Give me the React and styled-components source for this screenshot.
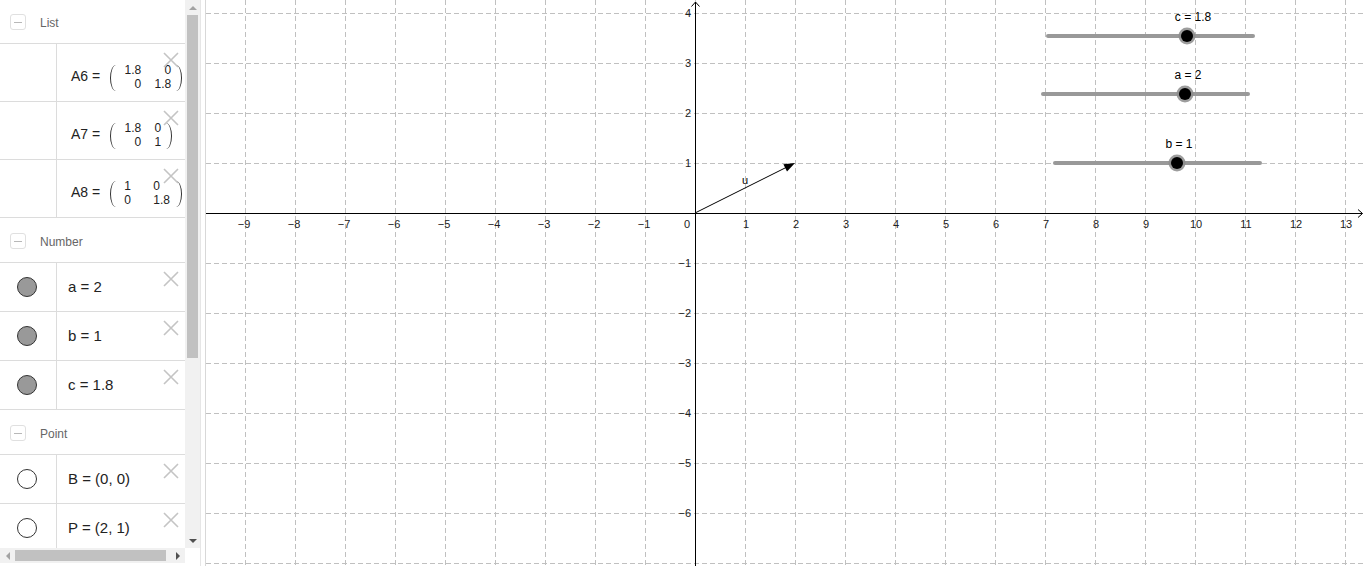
import React from "react";
import styled, { createGlobalStyle } from "styled-components";

const GlobalStyle = createGlobalStyle`
  html, body {
    margin: 0;
    padding: 0;
    overflow: hidden;
    background: #fff;
  }
  body {
    font-family: "Liberation Sans", Arial, sans-serif;
  }
`;

const groups = [
  {
    title: "List",
    kind: "matrix",
    items: [
      { name: "A6", cols: "17px 17px", gap: 13, align: "right", cells: ["1.8", "0", "0", "1.8"] },
      { name: "A7", cols: "17px 7px", gap: 13, align: "right", cells: ["1.8", "0", "0", "1"] },
      { name: "A8", cols: "7px 18px", gap: 22, align: "left", cells: ["1", "0", "0", "1.8"] },
    ],
  },
  {
    title: "Number",
    kind: "number",
    items: [{ text: "a = 2" }, { text: "b = 1" }, { text: "c = 1.8" }],
  },
  {
    title: "Point",
    kind: "point",
    items: [{ text: "B = (0, 0)" }, { text: "P = (2, 1)" }],
  },
];

const AlgebraView = () => (
  <Panel>
    <PanelBody>
      <ListArea>
        {groups.map((g, gi) => (
          <div key={g.title}>
            <GroupHeader first={gi === 0}>
              <CollapseBtn />
              <GroupTitle>{g.title}</GroupTitle>
            </GroupHeader>
            {g.items.map((item, i) => (
              <Row key={i} tall={g.kind === "matrix"}>
                <MarbleCell>
                  {g.kind !== "matrix" && <Marble filled={g.kind === "number"} />}
                </MarbleCell>
                <ContentCell>
                  {g.kind === "matrix" ? (
                    <MatrixLine>
                      <MatrixName>{item.name} =</MatrixName>
                      <Paren />
                      <MatrixGrid cols={item.cols} gap={item.gap} align={item.align}>
                        {item.cells.map((c, j) => (
                          <span key={j}>{c}</span>
                        ))}
                      </MatrixGrid>
                      <Paren right />
                    </MatrixLine>
                  ) : (
                    <ItemText>{item.text}</ItemText>
                  )}
                </ContentCell>
                <DeleteBtn>
                  <svg width="16" height="16" viewBox="0 0 16 16">
                    <path d="M1 1 L15 15 M15 1 L1 15" stroke="#c4c4c4" strokeWidth="1.6" fill="none" />
                  </svg>
                </DeleteBtn>
              </Row>
            ))}
          </div>
        ))}
      </ListArea>
      <VScroll>
        <ScrollBtn>
          <Tri dir="up" />
        </ScrollBtn>
        <VThumb />
        <Filler />
        <ScrollBtn>
          <Tri dir="down" dark />
        </ScrollBtn>
      </VScroll>
    </PanelBody>
    <HScrollRow>
      <HScroll>
        <ScrollBtn>
          <Tri dir="left" />
        </ScrollBtn>
        <HThumb />
        <Filler />
        <ScrollBtn>
          <Tri dir="right" dark />
        </ScrollBtn>
      </HScroll>
      <Corner />
    </HScrollRow>
  </Panel>
);

// graphics view
const W = 1160;
const H = 566;
const ox = 489;
const oy = 213;
const unit = 50;
const minus = (n) => (n < 0 ? "\u2212" + Math.abs(n) : String(n));

const sliders = [
  { label: "c = 1.8", x1: 842, x2: 1047, y: 36, hx: 981, lx: 987, ly: 21 },
  { label: "a = 2", x1: 837, x2: 1042, y: 94, hx: 979, lx: 982, ly: 79 },
  { label: "b = 1", x1: 849, x2: 1054, y: 163, hx: 971, lx: 973, ly: 148 },
];

const Graphics = () => {
  const xs = [];
  for (let k = -9; k <= 13; k++) xs.push(k);
  const ys = [];
  for (let k = -7; k <= 4; k++) ys.push(k);
  return (
    <GraphView>
      <svg width={W} height={H} viewBox={`0 0 ${W} ${H}`}>
        <g stroke="#c0c0c0" strokeWidth="1" strokeDasharray="5 3">
          {xs.map((k) => (
            <line key={"v" + k} x1={ox + k * unit + 0.5} y1="0" x2={ox + k * unit + 0.5} y2={H} />
          ))}
          {ys.map((k) => (
            <line key={"h" + k} x1="0" y1={oy - k * unit + 0.5} x2={W} y2={oy - k * unit + 0.5} />
          ))}
        </g>
        <g stroke="#000" strokeWidth="1" fill="none">
          <line x1="0" y1={oy + 0.5} x2="1156" y2={oy + 0.5} />
          <polyline points="1152,209.5 1156.5,213.5 1152,217.5" />
          <line x1={ox + 0.5} y1="2" x2={ox + 0.5} y2={H} />
          <polyline points="485.5,6.5 489.5,2 493.5,6.5" />
        </g>
        <g fontFamily="'Liberation Sans', Arial, sans-serif" fontSize="11" fill="#222">
          {xs
            .filter((k) => k !== 0)
            .map((k) => (
              <text key={"xl" + k} x={ox + k * unit + (k < 0 ? -1 : 1)} y={oy + 15} textAnchor="middle">
                {minus(k)}
              </text>
            ))}
          {ys
            .filter((k) => k !== 0 && k > -7)
            .map((k) => (
              <text key={"yl" + k} x={ox - 4} y={oy - k * unit + 4} textAnchor="end">
                {minus(k)}
              </text>
            ))}
          <text x={ox - 5} y={oy + 15} textAnchor="end">0</text>
        </g>
        {/* vector u */}
        <line x1={ox} y1={oy} x2="581" y2="167" stroke="#000" strokeWidth="1" />
        <polygon points="589,163 577.4,164.3 581,171.5" fill="#000" />
        <text x="539" y="184" textAnchor="middle" fontSize="11" fill="#000" fontFamily="'Liberation Sans', Arial, sans-serif">
          u
        </text>
        {sliders.map((s) => (
          <g key={s.label}>
            <line x1={s.x1} y1={s.y} x2={s.x2} y2={s.y} stroke="#999" strokeWidth="4" strokeLinecap="round" />
            <circle cx={s.hx} cy={s.y} r="8.5" fill="#8c8c8c" opacity="0.85" />
            <circle cx={s.hx} cy={s.y} r="6" fill="#000" />
            <text
              x={s.lx}
              y={s.ly}
              textAnchor="middle"
              fontSize="12"
              fontFamily="'Liberation Sans', Arial, sans-serif"
              fill="#000"
            >
              {s.label}
            </text>
          </g>
        ))}
      </svg>
    </GraphView>
  );
};

export default function App() {
  return (
    <>
      <GlobalStyle />
      <Page>
        <AlgebraView />
        <Splitter />
        <Graphics />
      </Page>
    </>
  );
}

// css
const Page = styled.div`
  display: flex;
  width: 1366px;
  height: 566px;
  overflow: hidden;
  background: #fff;
`;

const Panel = styled.div`
  width: 200px;
  flex: none;
  display: flex;
  flex-direction: column;
  padding-bottom: 3px;
  box-sizing: border-box;
`;

const PanelBody = styled.div`
  display: flex;
  height: 548px;
`;

const ListArea = styled.div`
  width: 185px;
  overflow: hidden;
`;

const GroupHeader = styled.div`
  height: ${(p) => (p.first ? "44px" : "45px")};
  box-sizing: border-box;
  border-bottom: 1px solid #dcdcdc;
  display: flex;
  align-items: center;
  padding: ${(p) => (p.first ? "2px" : "3px")} 0 0 10px;
`;

const CollapseBtn = styled.span`
  width: 14px;
  height: 14px;
  border: 1px solid #e0e0e0;
  border-radius: 3px;
  position: relative;
  margin-top: -1px;
  &::after {
    content: "";
    position: absolute;
    left: 3px;
    right: 3px;
    top: 7px;
    height: 1px;
    background: #b8b8b8;
  }
`;

const GroupTitle = styled.span`
  margin-left: 14px;
  font-size: 12px;
  color: #666;
`;

const Row = styled.div`
  position: relative;
  display: flex;
  height: ${(p) => (p.tall ? "58px" : "49px")};
  box-sizing: border-box;
  border-bottom: 1px solid #dcdcdc;
`;

const MarbleCell = styled.div`
  width: 56px;
  flex: none;
  border-right: 1px solid #dcdcdc;
  display: flex;
  align-items: center;
  justify-content: center;
  padding-bottom: 1px;
`;

const Marble = styled.span`
  width: 18px;
  height: 18px;
  border-radius: 50%;
  border: 1px solid #333;
  background: ${(p) => (p.filled ? "#999" : "#fff")};
  margin-right: 2px;
`;

const ContentCell = styled.div`
  flex: 1;
  display: flex;
  align-items: center;
  padding-left: 11px;
  padding-bottom: 2px;
`;

const ItemText = styled.span`
  font-size: 15px;
  color: #222;
  white-space: nowrap;
`;

const MatrixLine = styled.div`
  display: flex;
  align-items: center;
  padding-top: 11px;
  margin-left: 3px;
  white-space: nowrap;
`;

const MatrixName = styled.span`
  font-size: 14px;
  color: #222;
  margin-right: 10px;
  margin-top: -3px;
`;

const Paren = styled.span`
  width: 6px;
  height: 26px;
  box-sizing: border-box;
  margin-top: 2px;
  ${(p) =>
    p.right
      ? `border-right: 1.4px solid #333; border-radius: 0 100% 100% 0 / 0 50% 50% 0;`
      : `border-left: 1.4px solid #333; border-radius: 100% 0 0 100% / 50% 0 0 50%;`}
`;

const MatrixGrid = styled.div`
  display: grid;
  grid-template-columns: ${(p) => p.cols};
  column-gap: ${(p) => p.gap}px;
  line-height: 14.5px;
  font-size: 12px;
  color: #222;
  text-align: ${(p) => p.align};
  padding: 0 5px 0 8px;
`;

const DeleteBtn = styled.span`
  position: absolute;
  top: 8px;
  left: 163px;
  width: 16px;
  height: 16px;
  display: flex;
`;

const VScroll = styled.div`
  width: 15px;
  background: #f1f1f1;
  display: flex;
  flex-direction: column;
`;

const ScrollBtn = styled.div`
  width: 15px;
  height: 15px;
  flex: none;
  display: flex;
  align-items: center;
  justify-content: center;
`;

const Filler = styled.div`
  flex: 1;
`;

const VThumb = styled.div`
  height: 343px;
  margin: 0 2px;
  background: #c1c1c1;
`;

const HScrollRow = styled.div`
  display: flex;
  height: 15px;
`;

const HScroll = styled.div`
  width: 185px;
  background: #f1f1f1;
  display: flex;
`;

const HThumb = styled.div`
  width: 151px;
  margin: 2px 0;
  background: #c1c1c1;
`;

const Corner = styled.div`
  width: 15px;
  background: #fff;
`;

const Tri = styled.span`
  width: 0;
  height: 0;
  ${(p) => {
    const c = p.dark ? "#505050" : "#a3a3a3";
    if (p.dir === "up") return `border-left: 4px solid transparent; border-right: 4px solid transparent; border-bottom: 4px solid ${c};`;
    if (p.dir === "down") return `border-left: 4px solid transparent; border-right: 4px solid transparent; border-top: 4px solid ${c};`;
    if (p.dir === "left") return `border-top: 4px solid transparent; border-bottom: 4px solid transparent; border-right: 4px solid ${c};`;
    return `border-top: 4px solid transparent; border-bottom: 4px solid transparent; border-left: 4px solid ${c};`;
  }}
`;

const Splitter = styled.div`
  width: 4px;
  flex: none;
  background: #fff;
  border-left: 1px solid #e6e6e6;
  border-right: 1px solid #d8d8d8;
`;

const GraphView = styled.div`
  flex: 1;
  overflow: hidden;
  svg {
    display: block;
  }
`;
